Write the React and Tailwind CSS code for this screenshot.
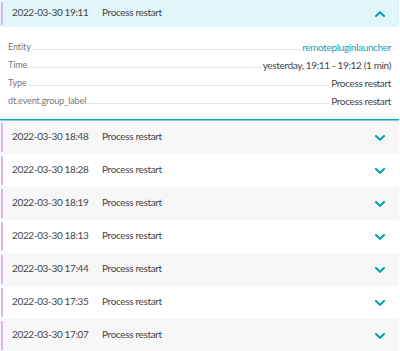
const rows = [
  { time: "2022-03-30 18:48", title: "Process restart" },
  { time: "2022-03-30 18:28", title: "Process restart" },
  { time: "2022-03-30 18:19", title: "Process restart" },
  { time: "2022-03-30 18:13", title: "Process restart" },
  { time: "2022-03-30 17:44", title: "Process restart" },
  { time: "2022-03-30 17:35", title: "Process restart" },
  { time: "2022-03-30 17:07", title: "Process restart" },
];

const details = [
  { label: "Entity", value: "remotepluginlauncher", link: true },
  { label: "Time", value: "yesterday, 19:11 - 19:12 (1 min)" },
  { label: "Type", value: "Process restart" },
  { label: "dt.event.group_label", value: "Process restart" },
];

const Chevron = ({ up }) => (
  <svg width="10" height="6" viewBox="0 0 10 6" fill="none">
    <path
      d={up ? "M1 5 L5 1.2 L9 5" : "M1 1 L5 4.8 L9 1"}
      stroke="#00a1b2"
      strokeWidth="2"
      strokeLinecap="square"
    />
  </svg>
);

const Row = ({ time, title, bg, h, up }) => (
  <div className={"flex items-stretch " + bg + " " + h}>
    <div className="ml-px w-[2px] my-[2px] bg-[#d9b6ec]" />
    <div className="flex flex-1 items-center pl-[9px] pr-[14px]">
      <span className="w-[90px] pb-[3px]">{time}</span>
      <span className="flex-1 pb-[3px]">{title}</span>
      <Chevron up={up} />
    </div>
  </div>
);

const App = () => {
  return (
    <div className="w-[399px] h-[351px] overflow-hidden bg-white font-['Lato',sans-serif] text-[10px] tracking-[-0.35px] text-[#454646]">
      {/* expanded event */}
      <Row time="2022-03-30 19:11" title="Process restart" bg="bg-[#e1f6fa]" h="h-[27px]" up />
      <div className="px-2 pt-[11px] pb-[9px] border-b border-[#00a1b2]">
        {details.map((d) => (
          <div key={d.label} className="flex items-center h-[18px]">
            <span className="text-[9px] tracking-[-0.1px] text-[#777]">{d.label}</span>
            <div className="flex-1 h-px mt-[5px] mx-px bg-[#e6e6e6]" />
            <span className={d.link ? "text-[#1a9fb0]" : ""}>{d.value}</span>
          </div>
        ))}
      </div>
      <div className="h-px bg-[#7fd3dc]" />
      {rows.map((r, i) => (
        <Row
          key={r.time}
          time={r.time}
          title={r.title}
          bg={i % 2 === 0 ? "bg-[#f7f7f7]" : "bg-white"}
          h="h-[33px]"
        />
      ))}
    </div>
  );
};

export default App;
